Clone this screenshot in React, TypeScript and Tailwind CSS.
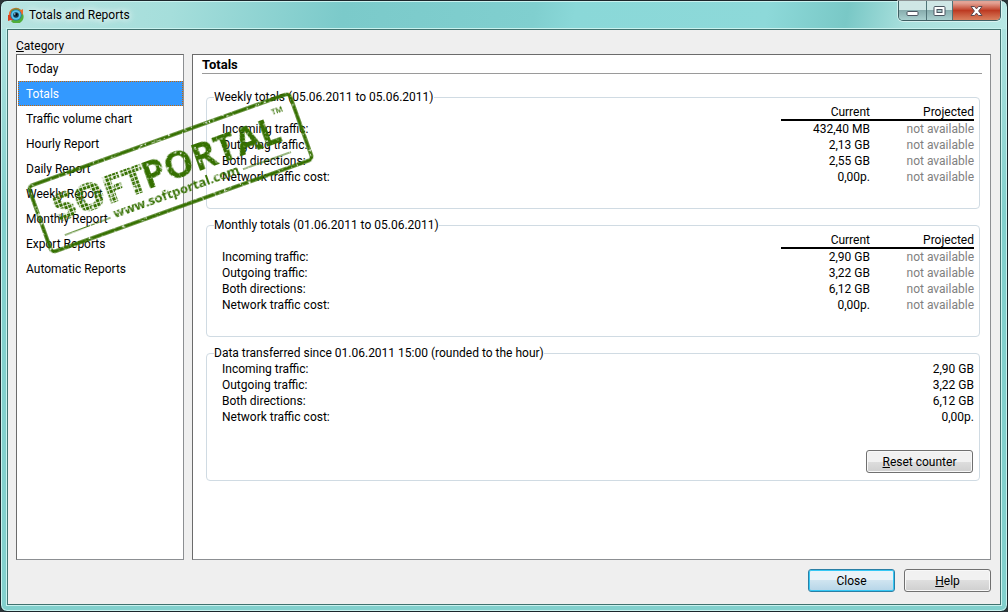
import React, { useState } from 'react';
import clsx from 'clsx';

const categories = [
  'Today',
  'Totals',
  'Traffic volume chart',
  'Hourly Report',
  'Daily Report',
  'Weekly Report',
  'Monthly Report',
  'Export Reports',
  'Automatic Reports',
];

type Row = { label: string; current: string; projected?: string };

const weekly: Row[] = [
  { label: 'Incoming traffic:', current: '432,40 MB', projected: 'not available' },
  { label: 'Outgoing traffic:', current: '2,13 GB', projected: 'not available' },
  { label: 'Both directions:', current: '2,55 GB', projected: 'not available' },
  { label: 'Network traffic cost:', current: '0,00р.', projected: 'not available' },
];

const monthly: Row[] = [
  { label: 'Incoming traffic:', current: '2,90 GB', projected: 'not available' },
  { label: 'Outgoing traffic:', current: '3,22 GB', projected: 'not available' },
  { label: 'Both directions:', current: '6,12 GB', projected: 'not available' },
  { label: 'Network traffic cost:', current: '0,00р.', projected: 'not available' },
];

const sinceReset: Row[] = [
  { label: 'Incoming traffic:', current: '2,90 GB' },
  { label: 'Outgoing traffic:', current: '3,22 GB' },
  { label: 'Both directions:', current: '6,12 GB' },
  { label: 'Network traffic cost:', current: '0,00р.' },
];

const AppIcon: React.FC = () => (
  <svg width="16" height="16" viewBox="0 0 16 16" aria-hidden="true">
    <path d="M1 9a7 7 0 0 1 12-6l2-1v6H9" fill="#ef6a2c" />
    <path d="M0 14V8h15a7 7 0 0 1-12 5z" fill="#d8401e" />
    <path d="M15 7a7 7 0 0 1-12 7l5-3z" fill="#4fae3a" />
    <path d="M2 5a7 7 0 0 1 11-2l-5 2z" fill="#7a8f35" />
    <circle cx="8" cy="8" r="5.6" fill="#1c79a8" />
    <circle cx="8" cy="8" r="4.8" fill="#58c4ea" />
    <circle cx="8" cy="8" r="2.8" fill="#12364d" />
    <circle cx="8.4" cy="7.6" r="1.1" fill="#000" />
    <circle cx="6.8" cy="7" r=".7" fill="#cfeefa" />
  </svg>
);

const WindowButtons: React.FC = () => (
  <div className="flex h-5 overflow-hidden rounded-b-[5px] border border-t-0 border-[#3f5f63] shadow-[0_0_0_1px_rgba(255,255,255,0.5)]">
    <button
      aria-label="Minimize"
      className="flex w-[27px] items-center justify-center bg-linear-to-b from-[#cfe6e5] from-45% via-[#88adae] via-50% to-[#a9d0cf]"
    >
      <svg width="13" height="12" viewBox="0 0 13 12" aria-hidden="true">
        <rect x="1" y="6.5" width="11" height="4" rx="1" fill="#fff" stroke="#4b5560" />
      </svg>
    </button>
    <button
      aria-label="Maximize"
      className="flex w-[27px] items-center justify-center border-x border-[#4f7377] bg-linear-to-b from-[#cfe6e5] from-45% via-[#88adae] via-50% to-[#a9d0cf]"
    >
      <svg width="13" height="12" viewBox="0 0 13 12" aria-hidden="true">
        <rect x="1" y="1.5" width="11" height="9" rx="1" fill="#fff" stroke="#4b5560" />
        <rect x="4" y="4.5" width="5" height="3" fill="#a9c8c9" stroke="#4b5560" />
      </svg>
    </button>
    <button
      aria-label="Close window"
      className="flex w-[47px] items-center justify-center bg-linear-to-b from-[#e3a294] from-10% via-[#bd3a22] via-50% to-[#d9805f]"
    >
      <svg width="13" height="12" viewBox="0 0 13 12" aria-hidden="true">
        <path
          d="M1 1.5h3.5l2 2.4 2-2.4H12L8.6 6l3.4 4.5H8.5l-2-2.4-2 2.4H1L4.4 6z"
          fill="#fff"
          stroke="#5c4a50"
          strokeLinejoin="round"
        />
      </svg>
    </button>
  </div>
);

const PushButton: React.FC<{ children: React.ReactNode; primary?: boolean; wide?: boolean }> = ({
  children,
  primary,
  wide,
}) => (
  <button
    className={clsx(
      'h-[23px] rounded-[3px] border bg-linear-to-b from-50% via-50% text-center leading-5',
      wide ? 'w-[107px]' : 'w-[87px]',
      primary
        ? 'border-[#2b7fa5] from-[#eaf3f8] via-[#cfe4f0] to-[#b5d5e8] shadow-[inset_0_0_0_1px_#35c8f5]'
        : 'border-[#707070] from-[#f1f1f1] via-[#dedede] to-[#cfcfcf] shadow-[inset_0_0_0_1px_#f8f8f8]',
    )}
  >
    {children}
  </button>
);

const TrafficTable: React.FC<{ rows: Row[]; name: string }> = ({ rows, name }) => {
  const projected = rows.some((row) => row.projected);

  return (
    <table className="w-full border-separate border-spacing-0" aria-label={name}>
      {projected && (
        <thead>
          <tr className="h-4">
            <td className="p-0" />
            <th scope="col" className="w-[89px] border-b-2 border-black p-0 pt-px text-right font-normal leading-[13px]">
              Current
            </th>
            <th scope="col" className="w-[104px] border-b-2 border-black p-0 pt-px text-right font-normal leading-[13px]">
              Projected
            </th>
          </tr>
        </thead>
      )}
      <tbody>
        {rows.map((row) => (
          <tr key={row.label} className="h-4">
            <th scope="row" className="p-0 pl-2 text-left font-normal">
              {row.label}
            </th>
            <td className="p-0 text-right">{row.current}</td>
            {projected && <td className="p-0 text-right text-[#808080]">{row.projected}</td>}
          </tr>
        ))}
      </tbody>
    </table>
  );
};

const Group: React.FC<{ title: string; children: React.ReactNode }> = ({ title, children }) => (
  <fieldset className="min-w-0 rounded-[4px] border border-[#d0dbe3] pr-[5px] pl-[7px]">
    <legend className="h-4">{title}</legend>
    {children}
  </fieldset>
);

const Stamp: React.FC = () => (
  <svg
    className="pointer-events-none absolute top-20 left-5"
    width="300"
    height="180"
    viewBox="21 81 300 180"
    role="img"
    aria-label="Softportal"
  >
    <defs>
      <pattern id="blocks" width="4" height="4" patternUnits="userSpaceOnUse">
        <rect width="3.2" height="3.2" fill="#346f05" />
      </pattern>
      <filter id="worn" x="-5%" y="-5%" width="110%" height="110%">
        <feTurbulence type="fractalNoise" baseFrequency="0.3" numOctaves="3" seed="8" result="noise" />
        <feColorMatrix in="noise" type="matrix" values="0 0 0 0 0  0 0 0 0 0  0 0 0 0 0  0 0 0 -5 4" result="mask" />
        <feComposite in="SourceGraphic" in2="mask" operator="in" />
      </filter>
    </defs>
    <g transform="translate(27 186) rotate(-19.7)" filter="url(#worn)" fill="#346f05">
      <rect x="1" y="1" width="277" height="70" rx="4" fill="none" stroke="#346f05" strokeWidth="3.5" />
      <text x="17" y="45" fontSize="39" className="font-['Open_Sans',sans-serif] font-extrabold" fill="url(#blocks)">
        SOFT
      </text>
      <text x="112" y="44" fontSize="37" className="font-['Open_Sans',sans-serif] font-bold">
        PORTAL
      </text>
      <text x="255" y="22" fontSize="16" className="font-['Open_Sans',sans-serif] font-bold">
        ™
      </text>
      <text x="72" y="60" fontSize="13" className="font-['Open_Sans',sans-serif] font-bold">
        www.softportal.com
      </text>
      <path d="M19 59L68 58M209 57L260 57" stroke="#346f05" strokeWidth="1" />
    </g>
  </svg>
);

const App: React.FC = () => {
  const [selected, setSelected] = useState('Totals');

  return (
    <div className="h-screen min-h-[560px] bg-[#2b3438] font-[Roboto,'Noto_Sans',sans-serif] text-[12px] leading-4 text-black">
      <div className="relative flex h-full flex-col rounded-[7px] border border-[#1c262b] bg-linear-to-b from-[#b3e5e2] to-[#82d0cd] to-35% px-[6px] pb-[6px] shadow-[inset_0_0_0_1px_#c9f2ef]">
        <header className="-mx-[5px] mt-px flex h-[27px] shrink-0 justify-between rounded-t-[6px] bg-[linear-gradient(100deg,#b8e4e1_0%,#a5dedb_17%,#7bcaca_34%,#80cfcf_53%,#8ad8d8_57%,#8dd9d9_76%,#79c8c6_84%,#a9e0dd_90%,#b8e8e5_100%)] pl-[6px]">
          <div className="flex items-center gap-[5px] pb-px">
            <AppIcon />
            <h1 className="[text-shadow:0_0_6px_#fff,0_0_10px_#fff]">Totals and Reports</h1>
          </div>
          <div className="-mt-px mr-[5px]">
            <WindowButtons />
          </div>
        </header>

        <main className="flex min-h-0 flex-1 flex-col border border-[#41726f] bg-[#efefef] pt-2 pr-[9px] pb-3 pl-2 shadow-[0_0_0_1px_#c9f2ef]">
          <div className="flex min-h-0 flex-1 gap-2">
            <nav aria-labelledby="category" className="flex w-[168px] shrink-0 flex-col">
              <h2 id="category">
                <u>C</u>ategory
              </h2>
              <ul className="flex-1 border border-[#8c8f92] border-t-[#6b6b6b] border-l-[#6b6b6b] bg-white pt-px pl-px">
                {categories.map((item) => (
                  <li key={item}>
                    <button
                      onClick={() => setSelected(item)}
                      className={clsx(
                        'block h-[25px] w-full border border-dotted pl-[7px] text-left',
                        item === selected ? 'border-[#cc6600] bg-[#3399ff] text-white' : 'border-transparent',
                      )}
                    >
                      {item}
                    </button>
                  </li>
                ))}
              </ul>
            </nav>

            <section className="mt-4 min-w-0 flex-1 border border-[#8c8f92] border-t-[#6b6b6b] border-l-[#6b6b6b] bg-white pr-2 pl-[9px]">
              <h2 className="h-[19px] border-b border-[#9a9a9a] text-[13px] leading-5 font-bold">Totals</h2>
              <div className="flex flex-col gap-2 pt-[15px] pr-[2px] pl-1">
                <Group title="Weekly totals (05.06.2011 to 05.06.2011)">
                  <div className="pb-[23px]">
                    <TrafficTable rows={weekly} name="Weekly totals" />
                  </div>
                </Group>
                <Group title="Monthly totals (01.06.2011 to 05.06.2011)">
                  <div className="pb-[23px]">
                    <TrafficTable rows={monthly} name="Monthly totals" />
                  </div>
                </Group>
                <Group title="Data transferred since 01.06.2011 15:00 (rounded to the hour)">
                  <TrafficTable rows={sinceReset} name="Data transferred" />
                  <div className="flex justify-end pt-[25px] pr-px pb-[7px]">
                    <PushButton wide>
                      <u>R</u>eset counter
                    </PushButton>
                  </div>
                </Group>
              </div>
            </section>
          </div>

          <footer className="flex shrink-0 justify-end gap-[9px] pt-[9px]">
            <PushButton primary>Close</PushButton>
            <PushButton>
              <u>H</u>elp
            </PushButton>
          </footer>
        </main>

        <Stamp />
      </div>
    </div>
  );
};

export default App;
